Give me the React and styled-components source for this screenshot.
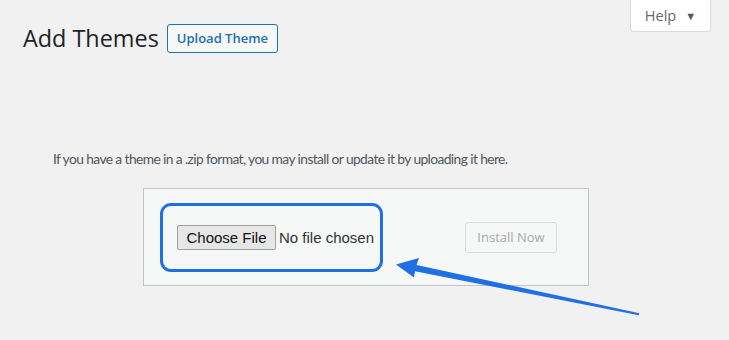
import styled, { createGlobalStyle } from "styled-components"

const Global = createGlobalStyle`
  body {
    margin: 0;
    background: #f1f1f1;
    font-family: "Open Sans", "Noto Sans", sans-serif;
  }
`

export default function App() {
  return (
    <>
      <Global />
      <Page>
        <Header>
          <TitleGroup>
            <Title>Add Themes</Title>
            <OutlineButton>Upload Theme</OutlineButton>
          </TitleGroup>
          <HelpTab>
            Help <Caret>▼</Caret>
          </HelpTab>
        </Header>
        <Help>If you have a theme in a .zip format, you may install or update it by uploading it here.</Help>
        <UploadForm>
          <FilePicker>
            <ChooseButton>Choose File</ChooseButton>
            <FileName>No file chosen</FileName>
          </FilePicker>
          <InstallButton disabled>Install Now</InstallButton>
          <Highlight />
        </UploadForm>
        <Arrow viewBox="0 0 729 340" width="729" height="340">
          <polygon
            fill="#1f6fe5"
            points="396,264.5 419,258 416.5,265 639.3,313.2 638.8,315.2 415,271.2 414,277.5"
          />
        </Arrow>
      </Page>
    </>
  )
}

const Page = styled.div`
  position: relative;
  width: 729px;
  height: 340px;
  overflow: hidden;
`

const Header = styled.div`
  display: flex;
  justify-content: space-between;
  align-items: flex-start;
  padding: 0 18px 0 23px;
`

const TitleGroup = styled.div`
  display: flex;
  align-items: center;
  gap: 8px;
  padding-top: 22px;
`

const Title = styled.h1`
  margin: 0;
  font-size: 23.4px;
  font-weight: 400;
  line-height: 32px;
  color: #1d2327;
`

const OutlineButton = styled.button`
  height: 29px;
  padding: 0 9px;
  border: 1px solid #2271b1;
  border-radius: 3px;
  background: #f6f7f7;
  color: #2271b1;
  font-family: inherit;
  font-size: 13px;
  font-weight: 600;
`

const HelpTab = styled.div`
  width: 81px;
  height: 32px;
  box-sizing: border-box;
  display: flex;
  align-items: center;
  justify-content: center;
  gap: 9px;
  background: #fff;
  border: 1px solid #dcdcde;
  border-top: none;
  border-radius: 0 0 4px 4px;
  box-shadow: 0 0 1px rgba(0, 0, 0, 0.06);
  color: #646970;
  font-size: 14.5px;
`

const Caret = styled.span`
  font-size: 11px;
  color: #50575e;
`

const Help = styled.p`
  margin: 94px 0 0 53px;
  font-family: Lato, "Open Sans", sans-serif;
  font-size: 13.8px;
  letter-spacing: -0.6px;
  line-height: 22px;
  color: #50575e;
`

const UploadForm = styled.div`
  position: relative;
  display: flex;
  align-items: center;
  box-sizing: border-box;
  width: 446px;
  height: 98px;
  margin: 18px 0 0 143px;
  padding: 0 31px 0 33px;
  background: #f6f7f7;
  border: 1px solid #c3c4c7;
`

const FilePicker = styled.div`
  display: flex;
  align-items: center;
  gap: 3px;
  font-family: "Liberation Sans", Arial, sans-serif;
  font-size: 15px;
`

const ChooseButton = styled.button`
  width: 99px;
  height: 25px;
  padding: 0;
  border: 1px solid #a0a0a0;
  border-radius: 2px;
  background: #e6e6e6;
  color: #111;
  font-family: inherit;
  font-size: 15px;
`

const FileName = styled.span`
  color: #333;
`

const InstallButton = styled.button`
  margin-left: auto;
  width: 92px;
  height: 31px;
  border: 1px solid #dcdcde;
  border-radius: 3px;
  background: #f6f7f7;
  color: #a7aaad;
  font-family: "Open Sans", sans-serif;
  font-size: 13px;
`

const Highlight = styled.div`
  position: absolute;
  left: 16px;
  top: 14px;
  width: 223px;
  height: 69px;
  box-sizing: border-box;
  border: 3px solid #1f6fe5;
  border-radius: 11px;
  pointer-events: none;
`

const Arrow = styled.svg`
  position: absolute;
  left: 0;
  top: 0;
  pointer-events: none;
`
